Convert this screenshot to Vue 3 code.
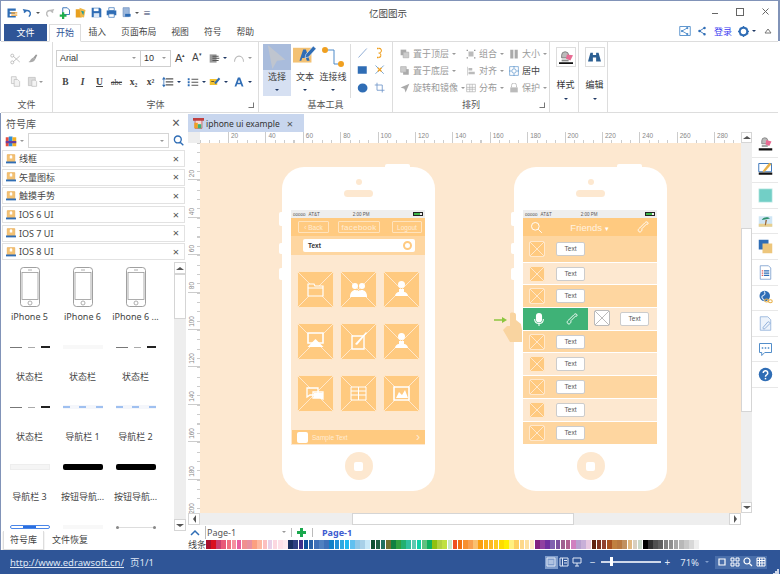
<script setup>
import { h } from 'vue'

const P = (d, fill = 'none', stroke = 'none', sw = 1) => ({ d, fill, stroke, sw })
const ICONS = {
  logo: [P('M2 2h11v3H5v2h7v2H5v3h8v2H2z', '#2f6db5'), P('M7 7h8v1.5H7zM7 10h8v1.5H7z', '#f0a030')],
  undo: [P('M3 8a5 5 0 0 1 9 0c1 3-1 5-2 6', 'none', '#2f6db5', 2), P('M1 3l6 1-3 5z', '#2f6db5')],
  redo: [P('M13 8a5 5 0 0 0-9 0c-1 3 1 5 2 6', 'none', '#bbb', 2), P('M15 3l-6 1 3 5z', '#bbb')],
  newdoc: [P('M5 1h6l3 3v6H5z', '#fff', '#2f6db5', 1.2), P('M1 10h3V7h3v3h3v3H7v3H4v-3H1z', '#1fae4a')],
  open: [P('M1 3h6l2 2v9H1z', '#e8a020'), P('M6 1l8 3-2 10-5-1z', '#f0b848'), P('M8 5l4 1-1 5z', '#1b9c9c')],
  save: [P('M1 1h12l2 2v12H1z', '#2f6db5'), P('M4 2h7v4H4z', '#fff'), P('M4 9h8v6H4z', '#dce8f6')],
  print: [P('M4 1h8v4H4z', '#fff', '#2f6db5'), P('M1 5h14v7H1z', '#2f6db5'), P('M4 10h8v5H4z', '#fff', '#2f6db5')],
  export: [P('M3 1h9v13H3z', '#9db8dc', '#6f90c0'), P('M6 10h8v4H6z', '#2f6db5')],
  share1: [P('M1 2h14v12H1z', '#fff', '#4e8bc9', 1.2), P('M4 8l7-4M4 8l7 4', 'none', '#4e8bc9', 1.2), P('M2.5 8a1.5 1.5 0 1 0 3 0a1.5 1.5 0 1 0-3 0M9.5 4a1.5 1.5 0 1 0 3 0a1.5 1.5 0 1 0-3 0M9.5 12a1.5 1.5 0 1 0 3 0a1.5 1.5 0 1 0-3 0', '#4e8bc9')],
  share2: [P('M4 8l8-5M4 8l8 5', 'none', '#2f6db5', 1.4), P('M2 8a2 2 0 1 0 4 0a2 2 0 1 0-4 0M10 3a2 2 0 1 0 4 0a2 2 0 1 0-4 0M10 13a2 2 0 1 0 4 0a2 2 0 1 0-4 0', '#2f6db5')],
  gear: [P('M8 2.5a5.5 5.5 0 1 0 0 11a5.5 5.5 0 1 0 0-11z', 'none', '#2f6db5', 3), P('M7 0h2v3H7zM7 13h2v3H7zM0 7h3v2H0zM13 7h3v2h-3zM2 3.4L3.4 2l2 2L4 5.4zM12 10.6l1.4-1.4 2 2-1.4 1.4zM2 12.6l2-2L5.4 12l-2 2zM10.6 4l2-2L14 3.4l-2 2z', '#2f6db5')],
  cut: [P('M4 4l9 8M4 12l9-8', 'none', '#bbb', 1.2), P('M1 3.5a2 2 0 1 0 4 0a2 2 0 1 0-4 0M1 12.5a2 2 0 1 0 4 0a2 2 0 1 0-4 0', 'none', '#bbb', 1.2)],
  brush: [P('M9 7l4-5 2 1-3 6z', '#999'), P('M2 13c3 0 3-5 7-6l3 2c-1 4-6 5-10 4z', '#aaa')],
  copy: [P('M2 1h7l0 10H2z', '#f2f2f2', '#bbb'), P('M6 5h5l3 3v7H6z', '#f2f2f2', '#bbb')],
  paste: [P('M2 2h10v12H2z', '#ddd', '#bbb'), P('M7 6h5l2 2v7H7z', '#f4f4f4', '#bbb')],
  alignIc: [P('M1 2h10v12H1z', '#999'), P('M5 4h9v1.5H5zM5 7h10v1.5H5zM5 10h9v1.5H5z', '#555')],
  arc: [P('M2 13C2 3 14 3 14 13', 'none', '#bbb', 1.4)],
  spacing: [P('M5 3h10v1.5H5zM5 7h10v1.5H5zM5 11h10v1.5H5z', '#555'), P('M2.5 1L5 4.5H0zM2.5 15L0 11.5h5z', '#2f6db5'), P('M2 4h1v8H2z', '#2f6db5')],
  bullets: [P('M1 3h2.5v2.5H1zM1 7h2.5v2.5H1zM1 11h2.5v2.5H1z', '#2f6db5'), P('M6 3.5h9V5H6zM6 7.5h9V9H6zM6 11.5h9V13H6z', '#555')],
  marker: [P('M1 4h10v8H1z', '#f2c230'), P('M7 9l6-7 2 2-6 7z', '#2f6db5'), P('M3 7h4v1H3z', '#333')],
  letterA: [P('M6.5 2h3L14 14h-2.5l-1-3h-5l-1 3H2zM8 4.5L6.3 9h3.4z', '#2f6db5')],
  cursor: [P('M3 0l19 16-9 1-5 9z', '#bfc5cf')],
  textTool: [P('M0 3h20v16H0z', '#f3c173'), P('M7 17L11 5h3l4 12h-3l-1-3H10l-1 3z', '#2f6db5'), P('M14 10l8-9 3 3-8 9-4 1z', '#2f6db5', '#fff', .6)],
  connector: [P('M5 5h8v14h7', 'none', '#4e8bc9', 1), P('M1 5a3 3 0 1 0 6 0a3 3 0 1 0-6 0M17 19a3 3 0 1 0 6 0a3 3 0 1 0-6 0', '#f0a020')],
  line: [P('M2 14L13 2', 'none', '#6d94c8', 1)],
  hook: [P('M6 2a3 3 0 0 1 3 5c-1 1-3 1-3 1s4 0 3 4a3 3 0 0 1-3 2', 'none', '#f0a020', 1.4), P('M4 1h2v2H4zM4 13h2v2H4z', '#f0a020')],
  rect: [P('M1 3h12v10H1z', '#2f6db5')],
  cross: [P('M2 2l11 11M2 13L13 2', 'none', '#4e8bc9', 1), P('M5 5l5 5M5 10l5-5', 'none', '#f0a020', 1.5)],
  ellipse: [P('M1 8a6.5 6 0 1 0 13 0a6.5 6 0 1 0-13 0', '#2f6db5')],
  crop: [P('M4 1v10h10M1 4h10v10', 'none', '#6d94c8', 1.1)],
  front: [P('M1 1h9v9H1z', '#aaa'), P('M5 5h9v9H5z', '#ccc', '#aaa')],
  back: [P('M5 5h9v9H5z', '#aaa'), P('M1 1h9v9H1z', '#ccc', '#aaa')],
  rotate: [P('M15 1L1 7l6 2 2 6z', '#aaa')],
  group: [P('M4 4h8v8H4z', '#bbb'), P('M1 1h2v2H1zM13 1h2v2h-2zM1 13h2v2H1zM13 13h2v2h-2z', '#888')],
  alignL: [P('M2 1h1v14H2zM4 3h6v4H4zM4 9h10v4H4z', '#bbb')],
  dist: [P('M1 2h14v12H1zM1 7h14M1 10h14M6 2v12M10 2v12', 'none', '#aaa', 1)],
  size: [P('M2 1h5v14H2zM9 1h5v14H9z', '#aaa')],
  center: [P('M1 1h14v14H1z', '#fff', '#4e8bc9', 1), P('M8 4.5a3.5 3.5 0 1 0 0 7a3.5 3.5 0 1 0 0-7zM8 0v4M8 12v4M0 8h4M12 8h4', 'none', '#4e8bc9', 1)],
  lock: [P('M4 7V4a4 4 0 0 1 8 0v3', 'none', '#bbb', 1.4), P('M2 7h12v8H2z', '#bbb')],
  styleIc: [P('M3 6a4 4 0 0 1 8 0v3H3z', '#bbb', '#777'), P('M9 5l7 1-3 6-5-2z', '#e86a92'), P('M0 14h16v2H0z', '#111'), P('M3 11h8v2H3z', '#888')],
  binoc: [P('M3 2h3v3h4V2h3l3 11h-6V8H6v5H0z', '#2c5f92')],
  lib: [P('M1 3h4v12H1z', '#e84c3d'), P('M5 2h5v13H5z', '#2f8fd8'), P('M10 3h5v12h-5z', '#f4b020'), P('M1 8h14v3H1z', '#6a3fa0', 'none')],
  search: [P('M7 1.5a5 5 0 1 0 0 10a5 5 0 1 0 0-10zM10.5 10.5L15 15', 'none', '#2f6db5', 2)],
  book: [P('M2 1h12v11H2z', '#f3c173', '#e8a84c'), P('M6 3l2-1.5L10 3v4H6z', '#fff'), P('M0 12h16v3H0z', '#2f6db5')],
  docIc: [P('M3 1h7l3 3v11H3z', '#f6d8d8', '#c04040'), P('M0 0h16v4H0z', '#c04040'), P('M2 7h5v8H2z', '#f0a020'), P('M7 9l5 0v6H7z', '#3fb277')],
  sStyle: [P('M5 5a4 4 0 0 1 8 0v4H5z', '#bbb', '#777'), P('M11 4l7 2-3 6-5-2z', '#e86a92'), P('M1 15h18v3H1z', '#111'), P('M5 11h8v2H5z', '#888')],
  sLine: [P('M1 2h17v11H1z', '#fff', '#2f6db5', 1.2), P('M7 11l8-10 3 2-8 9-4 2z', '#e8b048'), P('M1 14h18v3H1z', '#111')],
  sFill: [P('M1 1h18v18H1z', '#72cfc6', '#dff3f1')],
  sImage: [P('M1 3h18v14H1z', '#cfe6f5'), P('M1 13h18v4H1z', '#e8d090'), P('M10 8l-1 7h1.5L12 8z', '#9a6a3c'), P('M5 8c2-4 8-5 11-2l-5 1-6 1z', '#2c8f6c')],
  sLayer: [P('M1 1h13v13H1z', '#2f6db5'), P('M6 6h13v13H6z', '#edc67c')],
  sList: [P('M3 1h11l3 3v15H3z', '#fff', '#6d94c8', 1), P('M5 7h2v1.5H5zM5 10h2v1.5H5zM5 13h2v1.5H5z', '#e06060'), P('M8 7h7v1.5H8zM8 10h7v1.5H8zM8 13h7v1.5H8z', '#2f6db5')],
  sGlobe: [P('M2 8a7 7 0 1 0 14 0a7 7 0 1 0-14 0z', '#2f6db5'), P('M8 2c3 3 0 5-2 6s0 4 3 6', 'none', '#cfe0f5', 1.5), P('M9 14a2.5 2 0 0 1 5 0a2.5 2 0 0 1-5 0zM14 15a2.5 2 0 0 1 5 0a2.5 2 0 0 1-5 0z', 'none', '#e8b048', 1.4)],
  sNote: [P('M3 1h10l4 4v14H3z', '#edf3fb', '#88a9d6', 1), P('M7 15l6-7a2 2 0 0 1 3 2l-7 7a1.3 1.3 0 0 1-2-2', 'none', '#88a9d6', 1.2)],
  sChat: [P('M2 2h16v12H9l-4 4v-4H2z', '#fff', '#4e8bc9', 1.3), P('M5 7h2v2H5zM9 7h2v2H9zM13 7h2v2h-2z', '#4e8bc9')],
  sHelp: [P('M1 10a9 9 0 1 0 18 0a9 9 0 1 0-18 0z', '#2f6db5'), P('M7 8a3 3 0 1 1 4.5 2.5C10.5 11 10 11.5 10 13', 'none', '#fff', 2), P('M9 14.5h2v2H9z', '#fff')],
  folder: [P('M11 13h6l1 2h8v10H11zM11 17h15', 'none', '#fff', 1.2)],
  people: [P('M15 12a3 3 0 1 1 0 6a3 3 0 1 1 0-6zM22 12a3 3 0 1 1 0 6a3 3 0 1 1 0-6zM10 26c0-5 3-7 5-7 2 0 3 1 4 1 1-1 2-1 3-1 2 0 5 2 5 6v1z', '#fff')],
  person: [P('M18.5 10a3.5 3.5 0 1 1 0 7a3.5 3.5 0 1 1 0-7zM12 25c0-2 2-4 4-4v-3h5v3c2 0 4 2 4 4z', '#fff')],
  monitor: [P('M11 10h15v10H11z', 'none', '#fff', 1.6), P('M18.5 16l8 8h-16z', '#fff')],
  edit: [P('M12 13h12v13H12z', 'none', '#fff', 1.4), P('M15 21L26 9l1 1-10 12z', '#fff')],
  chat: [P('M10 13h11v7h-8l-3 2zM16 17h10v7l-3-1h-7z', 'none', '#fff', 1.3), P('M17 18h9v5h-9z', '#fff')],
  bookT: [P('M11 12h15v13H11zM18.5 12v13M11 16h15M11 20h15', 'none', '#fff', 1)],
  image: [P('M11 12h15v13H11z', 'none', '#fff', 1.6), P('M13 23l3-6 3 3 3-5 3 8z', '#fff')],
  mic: [P('M8 1a3.5 3.5 0 0 1 3.5 3.5v4a3.5 3.5 0 0 1-7 0v-4A3.500 3.500 0 0 1 8 1z', '#fff'), P('M3 8c0 7 10 7 10 0M8 13v3', 'none', '#fff', 1.2)],
  phoneT: [P('M5 20c-3-3 0-5 1-6l9-9c1-1 3-3 5-1 2 2 0 4-2 3l-8 8c1 3-2 7-5 5z', 'none', '#fff', 1.6)],
  searchT: [P('M9 2.5a6.5 6.5 0 1 0 0 13a6.5 6.5 0 1 0 0-13zM14 14l6 6', 'none', '#fff', 1.6)]
}

const Ico = (props) => {
  const vb = props.vb || 16
  return h('svg', { width: props.w || 14, height: props.h || props.w || 14, viewBox: `0 0 ${vb} ${vb}`, class: props.cls, style: 'display:block;flex:none' },
    (ICONS[props.n] || []).map((p) => h('path', { d: p.d, fill: p.fill, stroke: p.stroke, 'stroke-width': p.sw })))
}
Ico.props = ['n', 'w', 'h', 'vb', 'cls']

const tabs = ['插入', '页面布局', '视图', '符号', '帮助']
const fontRow = [
  { t: 'B', c: 'fb' }, { t: 'I', c: 'fi' }, { t: 'U', c: 'fu' }, { t: 'abc', c: 'fs' }, { t: 'x₂', c: 'fb' }, { t: 'x²', c: 'fb' }
]
const arrange = [
  { i: 'front', t: '置于顶层', a: 1 }, { i: 'group', t: '组合', a: 1 }, { i: 'size', t: '大小', a: 1 },
  { i: 'back', t: '置于底层', a: 1 }, { i: 'alignL', t: '对齐', a: 1 }, { i: 'center', t: '居中', a: 0, dark: 1 },
  { i: 'rotate', t: '旋转和镜像', a: 1 }, { i: 'dist', t: '分布', a: 1 }, { i: 'lock', t: '保护', a: 1 }
]
const libs = ['线框', '矢量图标', '触摸手势', 'IOS 6 UI', 'IOS 7 UI', 'IOS 8 UI']
const symbols = [
  { l: 'iPhone 5', k: 'phone' }, { l: 'iPhone 6', k: 'phone' }, { l: 'iPhone 6 ...', k: 'phone' },
  { l: '状态栏', k: 'status' }, { l: '状态栏', k: 'faint' }, { l: '状态栏', k: 'status' },
  { l: '状态栏', k: 'status' }, { l: '导航栏 1', k: 'nav' }, { l: '导航栏 2', k: 'nav' },
  { l: '导航栏 3', k: 'plain' }, { l: '按钮导航...', k: 'black' }, { l: '按钮导航...', k: 'black' },
  { l: '', k: 'seg' }, { l: '', k: 'faint' }, { l: '', k: 'slider' }
]
const hLabels = Array.from({ length: 14 }, (_, i) => (i + 1) * 20)
const vLabels = Array.from({ length: 10 }, (_, i) => (i + 1) * 20)
const tiles = ['folder', 'people', 'person', 'monitor', 'edit', 'person', 'chat', 'bookT', 'image']
const rows = [
  { c: 'dark', h: 27 }, { c: 'light', h: 22 }, { c: 'dark', h: 23 }, { c: 'green', h: 23 }, { c: 'dark', h: 22 },
  { c: 'light', h: 23 }, { c: 'dark', h: 23 }, { c: 'light', h: 23 }, { c: 'dark', h: 23 }
]
const side = ['sStyle', 'sLine', 'sFill', 'sImage', 'sLayer', 'sList', 'sGlobe', 'sNote', 'sChat', 'sHelp']
const palette = [
  'a8102e','d9101f','c94070','e85a78','f07080','f590a0','e860a0','f09090','e890a0','fba080','fdb8a0','fcc0c0','e8d0e8','fcd8e0','fde0e8','fdeaf0',
  '1a2f60','2f3f80','3f2f8a','0f4f9a','2860a8','4070b8','5080c0','3f70b8','1080c8','2090d8','30a8e0','20b8f0','60c0f0','90c8e8','a8d0e8','c8e8f8',
  '0f5030','1f6040','207060','707030','108040','30a040','20b070','30c0a0','60c8b0','10d0a8','60c080','10b060','90c010','b0d040','c0e040','c8e8c8',
  'f05020','f07010','f89030','f8a050','fac070','fa9f10','fcb018','fdb820','fec820','fedc00','ffee00','fff080','fdd060','fdd88a','fde0a0','fee8c0',
  '802080','9040a0','7030a0','8060b0','7c50a0','a06090','b06090','d080c0','b8a0d0','c8b0d8','e8c8e0',
  '602010','803020','904030','a85020','c08040','b87840','c09060','e0b880','d8d0c0','c8d8c8',
  '000000','303030','505050','606060','808080','909090','a8a8a8','b8b8b8','c8c8c8','d8d8d8','eeeeee'
].map((c) => '#' + c)
</script>

<template>
  <div class="app">
    <header class="title">
      <div class="qat">
        <Ico n="logo" :w="12" />
        <Ico n="undo" :w="11" class="ml" /><i class="dd" />
        <Ico n="redo" :w="11" class="ml" />
        <Ico n="newdoc" :w="12" class="ml" />
        <Ico n="open" :w="12" class="ml" />
        <Ico n="save" :w="11" class="ml" />
        <Ico n="print" :w="11" class="ml" />
        <Ico n="export" :w="11" class="ml" /><i class="dd" />
        <span class="more">≡</span>
      </div>
      <span class="app-name">亿图图示</span>
      <div class="win">
        <span class="min" /><span class="max" />
        <svg width="7" height="7" viewBox="0 0 7 7"><path d="M.5.5l6 6M.5 6.5l6-6" stroke="#666" fill="none" /></svg>
      </div>
    </header>

    <nav class="tabs">
      <span class="file-tab">文件</span>
      <span class="tab on">开始</span>
      <span v-for="t in tabs" :key="t" class="tab">{{ t }}</span>
      <div class="acct">
        <Ico n="share1" :w="12" />
        <Ico n="share2" :w="10" class="a2" />
        <span class="login">登录</span>
        <Ico n="gear" :w="11" class="a3" /><i class="dd navy" />
        <svg class="coll" width="8" height="6" viewBox="0 0 8 6"><path d="M1 5l3-4 3 4z" fill="none" stroke="#777" /></svg>
      </div>
    </nav>

    <section class="ribbon">
      <div class="grp g-file">
        <div class="gbody f-grid">
          <Ico n="cut" :w="12" /><Ico n="brush" :w="11" />
          <Ico n="copy" :w="11" /><div class="flex-c"><Ico n="paste" :w="11" /><i class="dd grey" /></div>
        </div>
        <div class="glabel">文件</div>
      </div>

      <div class="grp g-font">
        <div class="gbody">
          <div class="font-row1">
            <div class="combo font-name"><span>Arial</span><i class="dd grey" /></div>
            <div class="combo font-size"><span>10</span><i class="dd grey" /></div>
            <span class="big-a">A<sup>▴</sup></span>
            <span class="big-a sm">A<sup>▾</sup></span>
            <Ico n="alignIc" :w="11" class="ali" /><i class="dd navy" />
            <Ico n="arc" :w="12" class="ali2" /><i class="dd grey" />
          </div>
          <div class="font-row2">
            <span v-for="f in fontRow" :key="f.t" class="fbtn" :class="f.c">{{ f.t }}</span>
            <Ico n="spacing" :w="12" class="fi1" /><i class="dd navy" />
            <Ico n="bullets" :w="12" class="fi2" /><i class="dd navy" />
            <Ico n="marker" :w="12" class="fi3" /><i class="dd navy" />
            <Ico n="letterA" :w="12" class="fi4" /><i class="dd navy" />
          </div>
        </div>
        <div class="glabel">字体<span class="launch" /></div>
      </div>

      <div class="grp g-tools">
        <div class="gbody tools">
          <div class="tool sel">
            <div class="sel-top"><Ico n="cursor" :w="24" :vb="26" /></div>
            <span>选择</span><i class="dd navy" />
          </div>
          <div class="tool"><div class="tool-ic"><Ico n="textTool" :w="24" :vb="26" /></div><span>文本</span><i class="dd navy" /></div>
          <div class="tool"><div class="tool-ic"><Ico n="connector" :w="24" :vb="24" /></div><span>连接线</span><i class="dd navy" /></div>
          <div class="shapes">
            <Ico n="line" :w="12" /><Ico n="hook" :w="12" />
            <Ico n="rect" :w="12" /><Ico n="cross" :w="12" />
            <Ico n="ellipse" :w="12" /><Ico n="crop" :w="12" />
          </div>
        </div>
        <div class="glabel">基本工具</div>
      </div>

      <div class="grp g-arr">
        <div class="gbody arr">
          <div v-for="a in arrange" :key="a.t" class="arr-item" :class="{ dark: a.dark }">
            <Ico :n="a.i" :w="10" /><span>{{ a.t }}</span><i v-if="a.a" class="dd grey" />
          </div>
        </div>
        <div class="glabel">排列<span class="launch" /></div>
      </div>

      <div class="grp g-big">
        <div class="big-box"><Ico n="styleIc" :w="14" /></div>
        <span class="big-label">样式</span><i class="dd navy" />
      </div>
      <div class="grp g-big">
        <div class="big-box"><Ico n="binoc" :w="13" /></div>
        <span class="big-label">编辑</span><i class="dd navy" />
      </div>
    </section>

    <main class="work">
      <aside class="lib">
        <div class="lib-head"><span>符号库</span><b class="x big">×</b></div>
        <div class="lib-search">
          <Ico n="lib" :w="12" /><i class="dd grey" />
          <div class="sbox"><i class="dd grey" /></div>
          <Ico n="search" :w="11" />
        </div>
        <div class="lib-list">
          <div v-for="l in libs" :key="l" class="lib-item">
            <Ico n="book" :w="10" /><span>{{ l }}</span><b class="x">×</b>
          </div>
        </div>
        <div class="sym-wrap">
          <div class="sym-grid">
            <div v-for="(s, i) in symbols" :key="i" class="sym">
              <div class="thumb">
                <svg v-if="s.k === 'phone'" width="20" height="40" viewBox="0 0 20 40">
                  <rect x=".5" y=".5" width="19" height="39" rx="3" fill="#fff" stroke="#888" stroke-width=".8" />
                  <rect x="2" y="5.5" width="16" height="27" fill="#fff" stroke="#999" stroke-width=".8" />
                  <circle cx="10" cy="36" r="2" fill="none" stroke="#999" stroke-width=".8" /><path d="M8 3h4" stroke="#999" stroke-width=".8" />
                </svg>
                <div v-else class="th" :class="'th-' + s.k"><i /><i /><i /></div>
              </div>
              <div class="sym-l">{{ s.l }}</div>
            </div>
          </div>
          <div class="vbar lib-bar">
            <span class="sb-btn"><i class="up" /></span>
            <span class="thumb-v" />
            <span class="sb-fill" />
            <span class="sb-btn"><i class="down" /></span>
          </div>
        </div>
        <div class="lib-tabs"><span class="lt on">符号库</span><span class="lt">文件恢复</span></div>
      </aside>

      <section class="doc">
        <div class="doc-tabs">
          <div class="doc-tab"><Ico n="docIc" :w="11" /><span>iphone ui example</span><b>×</b></div>
        </div>
        <div class="doc-main">
          <div class="doc-left">
            <div class="ruler-h">
              <div class="corner" />
              <div class="rh-track">
                <div v-for="n in hLabels" :key="n" class="rh">{{ n }}</div>
              </div>
            </div>
            <div class="doc-mid">
              <div class="ruler-v"><div v-for="n in vLabels" :key="n" class="rv"><span>{{ n }}</span></div></div>
              <div class="canvas">
                <!-- Phone 1 -->
                <div class="phone">
                  <i class="pb b1" /><i class="pb b2" /><i class="pb b3" /><i class="pt" />
                  <span class="cam" /><span class="spk" />
                  <div class="screen">
                    <div class="sbar"><span>ooooo</span><span>AT&amp;T</span><span class="clock">2:00 PM</span><span class="batt"><i /></span></div>
                    <div class="nav1">
                      <span class="nbtn back">‹ Back</span><span class="nbtn fb1">facebook</span><span class="nbtn logout">Logout</span>
                    </div>
                    <div class="srch"><div class="srch-in"><b>Text</b><i class="clear" /></div></div>
                    <div class="tiles">
                      <svg v-for="(t, i) in tiles" :key="i" width="37" height="37" viewBox="0 0 37 37">
                        <rect x=".5" y=".5" width="36" height="36" rx="2" fill="#ffca80" stroke="#ffe8cc" />
                        <path d="M1 1l35 35M36 1L1 36" stroke="#ffe8cc" />
                        <path v-for="(p, j) in ICONS[t]" :key="j" :d="p.d" :fill="p.fill === 'none' ? '#ffca80' : p.fill" :stroke="p.stroke" :stroke-width="p.sw" />
                      </svg>
                    </div>
                    <div class="foot"><i class="sq" /><span>Sample Text</span><em>›</em></div>
                  </div>
                  <div class="home"><i /></div>
                </div>

                <!-- Phone 2 -->
                <div class="phone">
                  <i class="pb b1" /><i class="pb b2" /><i class="pb b3" /><i class="pt" />
                  <span class="cam" /><span class="spk" />
                  <div class="screen">
                    <div class="sbar"><span>ooooo</span><span>AT&amp;T</span><span class="clock c2">2:00 PM</span><span class="batt"><i /></span></div>
                    <div class="nav2">
                      <Ico n="searchT" :w="13" :vb="22" />
                      <span class="fr">Friends <small>▾</small></span>
                      <Ico n="phoneT" :w="14" :vb="24" />
                    </div>
                    <div v-for="(r, i) in rows" :key="i" class="row" :class="r.c" :style="{ height: r.h + 'px' }">
                      <template v-if="r.c === 'green'">
                        <div class="swipe"><Ico n="mic" :w="14" /><Ico n="phoneT" :w="14" :vb="24" /></div>
                        <div class="mini grey-t"><svg width="16" height="16" viewBox="0 0 16 16"><rect x=".5" y=".5" width="15" height="15" rx="1.5" fill="#fff" stroke="#bbb" /><path d="M1 1l14 14M15 1L1 15" stroke="#bbb" /></svg></div>
                        <span class="tbtn t2">Text</span>
                      </template>
                      <template v-else>
                        <svg class="mini" width="16" height="16" viewBox="0 0 16 16"><rect x=".5" y=".5" width="15" height="15" rx="1.5" fill="#ffca80" stroke="#ffe8cc" /><path d="M1 1l14 14M15 1L1 15" stroke="#ffe8cc" /></svg>
                        <span class="tbtn">Text</span>
                      </template>
                    </div>
                  </div>
                  <div class="home"><i /></div>
                </div>

                <svg class="hand" width="30" height="32" viewBox="0 0 30 32">
                  <path d="M16 2C16 0 22 0 22 3L22 8L27 12L28 18L28 30L16 30L9 18L13 14L16 14z" fill="#f9d4a0" />
                  <path d="M0 8h9" stroke="#8cc63f" stroke-width="1.5" /><path d="M8 5l5 3-5 3z" fill="#8cc63f" />
                </svg>
              </div>
            </div>
            <div class="hbar">
              <span class="sb-btn"><i class="left" /></span>
              <span class="h-pad" /><span class="thumb-h" /><span class="h-fill" />
              <span class="sb-btn"><i class="right" /></span>
            </div>
          </div>
          <div class="vbar doc-bar">
            <span class="sb-btn"><i class="up" /></span>
            <span class="v-pad" />
            <span class="thumb-v t2v" />
            <span class="sb-fill" />
            <span class="sb-btn"><i class="down" /></span>
          </div>
          <div class="side">
            <div v-for="s in side" :key="s" class="side-i"><Ico :n="s" :w="15" :vb="20" /></div>
          </div>
        </div>
        <div class="pages">
          <svg width="10" height="7" viewBox="0 0 10 7"><path d="M1 6l4-4 4 4" fill="none" stroke="#2f6db5" stroke-width="1.5" /></svg>
          <span class="pg1">Page-1</span><i class="dd grey pg-d" /><span class="vsep" />
          <svg class="plus" width="9" height="9" viewBox="0 0 9 9"><path d="M3 0h3v3h3v3H6v3H3V6H0V3h3z" fill="#1aa84d" /></svg>
          <span class="vsep s2" />
          <span class="pg2">Page-1</span>
        </div>
        <div class="colors">
          <span class="cl">线条</span>
          <div class="swatches"><i v-for="(c, i) in palette" :key="i" :style="{ background: c }" /></div>
        </div>
      </section>
    </main>

    <footer class="status">
      <a class="link">http://www.edrawsoft.cn/</a><span class="pgn">页1/1</span>
      <div class="st-right">
        <span class="vb on"><svg width="10" height="10" viewBox="0 0 10 10"><path d="M1 1h8v8H1zM2.5 4h5M2.5 6h5" fill="none" stroke="#dfe7f5" /></svg></span>
        <span class="vb"><svg width="10" height="10" viewBox="0 0 10 10"><path d="M1 1h8v8H1zM3.5 1v8M5 3.5h3M5 6h3" fill="none" stroke="#dfe7f5" /></svg></span>
        <span class="vb"><svg width="10" height="10" viewBox="0 0 10 10"><path d="M1 1h8v5H1zM5 6v3M3 9h4" fill="none" stroke="#dfe7f5" /></svg></span>
        <span class="pm minus">−</span>
        <div class="slider"><i /></div>
        <span class="pm plusz">+</span>
        <span class="pct">71%</span><i class="dd st-d" />
        <span class="vb dk"><svg width="10" height="10" viewBox="0 0 10 10"><path d="M2 2h6v6H2z" fill="none" stroke="#fff" stroke-width="1.2" /></svg></span>
        <span class="vb dk"><svg width="10" height="10" viewBox="0 0 10 10"><path d="M1 1h3v3H1zM6 1h3v3H6zM1 6h3v3H1zM6 6h3v3H6z" fill="none" stroke="#fff" /></svg></span>
        <span class="vb dk"><svg width="10" height="10" viewBox="0 0 10 10"><path d="M4 1a3 3 0 1 0 0 6a3 3 0 1 0 0-6zM6 6l3 3" fill="none" stroke="#fff" stroke-width="1.2" /></svg></span>
        <span class="vb dk"><svg width="10" height="10" viewBox="0 0 10 10"><path d="M1 1h8v8H1zM1 3.5h8M1 6h8M3.5 1v8M6 1v8" fill="none" stroke="#fff" /></svg></span>
        <svg class="grip" width="6" height="6" viewBox="0 0 6 6"><path d="M4 0h2v2H4zM2 2h2v2H2zM4 2h2v2H4zM0 4h2v2H0zM2 4h2v2H2zM4 4h2v2H4z" fill="#cfd8ea" /></svg>
      </div>
    </footer>
  </div>
</template>

<style>
html, body { margin: 0; padding: 0; background: #fff; }
</style>

<style scoped>
.app { width: 780px; height: 574px; box-sizing: border-box; display: flex; flex-direction: column; overflow: hidden; background: #fff; border-top: 1px solid #8193b8; font-family: "Noto Sans", "Noto Sans CJK SC", sans-serif; font-size: 9px; color: #444; }
.dd { display: inline-block; width: 0; height: 0; border-left: 2px solid transparent; border-right: 2px solid transparent; border-top: 2.5px solid #555; flex: none; }
.dd.navy { border-top-color: #1f3864; }
.dd.grey { border-top-color: #999; }

.title { height: 23px; flex: none; display: flex; align-items: center; position: relative; padding: 0 2px; border-left: 1px solid #8193b8; border-right: 2px solid #8193b8; }
.qat { display: flex; align-items: center; padding-left: 3px; }
.qat .ml { margin-left: 4px; }
.qat .dd { margin-left: 3px; }
.more { font-size: 8px; color: #1f3864; margin-left: 4px; }
.app-name { position: absolute; left: 368px; top: 5px; font-size: 9.5px; color: #444; }
.win { margin-left: auto; display: flex; align-items: center; gap: 18px; padding-right: 7px; padding-bottom: 2px; }
.min { width: 6px; height: 1px; background: #666; margin-top: 4px; }
.max { width: 6px; height: 6px; border: 1px solid #666; }

.tabs { height: 17px; flex: none; display: flex; align-items: stretch; padding-left: 3px; border-left: 1px solid #8193b8; border-right: 2px solid #8193b8; }
.file-tab { width: 43px; background: #2f5597; color: #fff; text-align: center; line-height: 17px; font-size: 9px; margin-right: 2px; }
.tab { padding: 0 7.5px; line-height: 17px; font-size: 8.8px; color: #444; }
.tab.on { width: 32px; box-sizing: border-box; padding: 0; text-align: center; border: 1px solid #ddd; border-bottom: 1px solid #fff; color: #2f5597; line-height: 16px; height: 18px; position: relative; z-index: 1; background: #fff; font-size: 9px; }
.acct { margin-left: auto; display: flex; align-items: center; padding: 0 6px 3px 0; }
.a2 { margin-left: 6px; }
.login { color: #3a3af0; margin-left: 7px; font-size: 9px; }
.a3 { margin-left: 6px; }
.acct .dd { margin-left: 3px; }
.coll { margin-left: 8px; }

.ribbon { height: 72px; flex: none; margin: 0 2px 0 1px; display: flex; border-top: 1px solid #ddd; border-bottom: 1px solid #ddd; box-sizing: border-box; }
.grp { display: flex; flex-direction: column; border-right: 1px solid #ddd; box-sizing: border-box; flex: none; }
.gbody { flex: 1; }
.glabel { height: 14px; line-height: 13px; text-align: center; color: #555; position: relative; font-size: 9px; }
.launch { position: absolute; right: 4px; top: 4px; width: 4px; height: 4px; border: 1px solid #777; border-left-color: transparent; border-top-color: transparent; }
.g-file { width: 52px; }
.f-grid { display: grid; grid-template-columns: 17px 18px; grid-template-rows: 23px 23px; padding: 5px 0 0 9px; align-items: center; }
.flex-c { display: flex; align-items: center; gap: 1px; }
.g-font { width: 206px; }
.font-row1 { display: flex; align-items: center; padding: 7px 0 0 3px; height: 18px; }
.combo { height: 17px; box-sizing: border-box; border: 1px solid #cfcfcf; display: flex; align-items: center; justify-content: space-between; padding: 0 4px 0 3px; font-size: 9px; color: #333; font-family: "Liberation Sans", sans-serif; }
.font-name { width: 85px; }
.font-size { width: 31px; margin-left: -1px; }
.big-a { font-size: 11px; color: #444; margin-left: 4px; width: 15px; line-height: 12px; font-family: "Liberation Sans", sans-serif; }
.big-a sup { font-size: 5px; vertical-align: 5px; line-height: 0; }
.big-a.sm { margin-left: 2px; font-size: 10px; }
.ali { margin-left: 2px; }
.font-row1 .dd { margin-left: 3px; }
.ali2 { margin-left: 6px; }
.font-row2 { display: flex; align-items: center; padding: 6px 0 0 4px; height: 18px; }
.font-row2 .dd { margin-left: 3px; }
.fbtn { width: 17px; text-align: center; font-family: "Liberation Serif", serif; font-size: 9.5px; color: #444; flex: none; }
.fb { font-weight: 700; } .fi { font-style: italic; font-weight: 700; } .fu { text-decoration: underline; font-weight: 700; } .fs { text-decoration: line-through; font-size: 8px; }
.fi1 { margin-left: 3px; } .fi2 { margin-left: 6px; } .fi3 { margin-left: 3px; } .fi4 { margin-left: 5px; }

.g-tools { width: 134px; }
.tools { display: flex; padding: 2px 0 0 4px; }
.tool { display: flex; flex-direction: column; align-items: center; width: 28px; font-size: 9px; height: 52px; color: #444; }
.tool.sel { background: #d6e0f2; }
.sel-top { background: #a9bcdc; width: 100%; height: 26px; display: flex; align-items: center; justify-content: center; }
.tool-ic { height: 26px; display: flex; align-items: center; justify-content: center; }
.tool span { line-height: 14px; white-space: nowrap; }
.tool .dd { margin-top: 5px; }
.shapes { margin-left: 3px; padding-left: 6px; border-left: 1px solid #ddd; display: grid; grid-template-columns: 12px 12px; grid-auto-rows: 17.5px; gap: 0 5px; align-items: center; height: 54px; }

.g-arr { width: 157px; }
.arr { display: grid; grid-template-columns: 66px 43px 40px; grid-auto-rows: 17px; padding: 3px 0 0 7px; }
.arr-item { display: flex; align-items: center; color: #9a9a9a; font-size: 9px; white-space: nowrap; }
.arr-item span { margin-left: 3px; }
.arr-item .dd { margin-left: 3px; }
.arr-item.dark { color: #444; }

.g-big { width: 29px; align-items: center; padding: 5px 0 0 3px; }
.big-box { width: 20px; height: 20px; box-sizing: border-box; border: 1px solid #ddd; display: flex; align-items: center; justify-content: center; flex: none; }
.big-label { margin-top: 12px; font-size: 9px; color: #333; line-height: 12px; }
.g-big .dd { margin-top: 7px; }

.work { flex: 1; min-height: 0; display: flex; border-left: 1px solid #8193b8; padding-top: 1px; }
.lib { width: 186px; flex: none; display: flex; flex-direction: column; box-sizing: border-box; overflow: hidden; }
.lib-head { height: 18px; display: flex; align-items: center; justify-content: space-between; padding: 0 7px 0 5px; font-size: 10px; color: #555; flex: none; }
.x { font-weight: 400; font-size: 11px; color: #555; line-height: 10px; }
.x.big { font-size: 14px; }
.lib-search { height: 17px; display: flex; align-items: center; padding-left: 4px; flex: none; }
.lib-search .dd { margin-left: 3px; }
.sbox { width: 141px; height: 15px; box-sizing: border-box; border: 1px solid #d5d5d5; margin: 0 4px; display: flex; align-items: center; justify-content: flex-end; padding-right: 4px; }
.lib-list { padding: 1px 0 0 1px; flex: none; }
.lib-item { width: 183px; height: 17px; box-sizing: border-box; border: 1px solid #e2e2e2; margin-bottom: 1.7px; display: flex; align-items: center; padding: 0 5px 0 3px; font-size: 9px; color: #444; }
.lib-item span { margin-left: 3px; flex: 1; }
.sym-wrap { flex: 1; min-height: 0; display: flex; padding-left: 1px; position: relative; }
.sym-grid { width: 170px; display: grid; grid-template-columns: repeat(3, 53px); grid-auto-rows: 60px; padding: 1px 0 0 1px; overflow: hidden; height: 267px; }
.sym { text-align: center; position: relative; }
.thumb { height: 48px; display: flex; align-items: center; justify-content: center; }
.sym-l { font-size: 9px; line-height: 12px; color: #444; }
.th { width: 40px; height: 4px; display: flex; justify-content: space-between; align-items: center; }
.th i { display: block; }
.th-status i { height: 1px; width: 12px; background: #777; }
.th-status i:last-child { width: 9px; height: 2px; background: #222; }
.th-status i:nth-child(2) { width: 7px; background: #aaa; }
.th-faint { background: #f8f8f8; }
.th-nav { background: #f4f6fb; }
.th-nav i { height: 2px; width: 7px; background: #9fc0f0; }
.th-plain { background: #f5f5f5; height: 6px; border: 1px solid #eee; box-sizing: border-box; }
.th-black { background: #000; height: 6px; border-radius: 2px; }
.th-seg { border: 1px solid #4a86e8; border-radius: 3px; box-sizing: border-box; }
.th-seg i { flex: 1; height: 100%; }
.th-seg i:nth-child(2) { background: #2a6fe0; }
.th-slider { height: 1px; background: #ddd; }
.th-slider i { width: 3px; height: 3px; border-radius: 50%; background: #888; }
.th-slider i:nth-child(2) { background: transparent; }

.vbar { display: flex; flex-direction: column; background: #eee; flex: none; width: 12px; }
.lib-bar { height: 269px; margin-left: 1px; }
.sb-btn { width: 12px; height: 12px; box-sizing: border-box; background: #fff; border: 1px solid #d5d5d5; display: flex; align-items: center; justify-content: center; flex: none; }
.sb-btn i { width: 0; height: 0; display: block; }
.up { border-left: 4px solid transparent; border-right: 4px solid transparent; border-bottom: 3.5px solid #555; }
.down { border-left: 4px solid transparent; border-right: 4px solid transparent; border-top: 3.5px solid #555; }
.left { border-top: 4px solid transparent; border-bottom: 4px solid transparent; border-right: 3.5px solid #555; }
.right { border-top: 4px solid transparent; border-bottom: 4px solid transparent; border-left: 3.5px solid #555; }
.thumb-v { display: block; width: 12px; height: 45px; box-sizing: border-box; background: #fff; border: 1px solid #d5d5d5; flex: none; }
.sb-fill { flex: 1; }
.lib-tabs { height: 19px; display: flex; padding-left: 2px; flex: none; align-items: stretch; }
.lt { padding: 0 7px; line-height: 18px; font-size: 9px; margin-right: 1px; color: #444; }
.lt.on { border: 1px solid #ddd; border-top: 0; box-shadow: 0 1px 1px #bbb; width: 41px; box-sizing: border-box; text-align: center; padding: 0; margin-right: 1px; }

.doc { flex: 1; min-width: 0; display: flex; flex-direction: column; padding-left: 1px; }
.doc-tabs { height: 18px; flex: none; display: flex; }
.doc-tab { width: 116px; background: #c8d6ee; display: flex; align-items: center; padding-left: 5px; box-sizing: border-box; font-size: 8.5px; color: #333; }
.doc-tab span { margin-left: 2px; }
.doc-tab b { font-weight: 400; font-size: 11px; margin-left: 7px; color: #555; }
.doc-main { height: 393px; flex: none; display: flex; }
.doc-left { width: 553px; display: flex; flex-direction: column; flex: none; }
.ruler-h { height: 11px; display: flex; flex: none; background: #fff; }
.corner { width: 12px; background: #eee; flex: none; }
.rh-track { flex: 1; overflow: hidden; display: flex; padding-left: 28px; background: repeating-linear-gradient(90deg, #ccc 0 1px, transparent 1px 9.35px) 0 8px / 100% 3px no-repeat; }
.rh { width: 37.4px; flex: none; box-sizing: border-box; font-size: 6.5px; color: #888; line-height: 8px; padding-left: 2px; border-left: 1px solid #ccc; font-family: "Liberation Sans", sans-serif; }
.doc-mid { flex: 1; min-height: 0; display: flex; }
.ruler-v { width: 12px; flex: none; overflow: hidden; background: repeating-linear-gradient(180deg, #ccc 0 1px, transparent 1px 9.35px) 9px 0 / 3px 100% no-repeat; }
.rv { height: 37.4px; box-sizing: border-box; border-bottom: 1px solid #ccc; display: flex; align-items: flex-end; }
.rv span { writing-mode: vertical-rl; transform: rotate(180deg); font-size: 6.5px; color: #888; line-height: 8px; font-family: "Liberation Sans", sans-serif; padding-top: 2px; }
.canvas { flex: 1; min-width: 0; background: #fde8d0; position: relative; overflow: hidden; display: flex; padding: 24px 0 0 82px; gap: 79px; align-items: flex-start; }
.phone { width: 153px; height: 324px; background: #fff; border-radius: 22px; position: relative; display: flex; flex-direction: column; align-items: center; flex: none; }
.pb { position: absolute; left: -3px; width: 3px; background: #fff; border-radius: 2px 0 0 2px; }
.b1 { top: 45px; height: 14px; } .b2 { top: 76px; height: 11px; } .b3 { top: 101px; height: 12px; }
.pt { position: absolute; top: -3px; left: 103px; width: 25px; height: 3px; background: #fff; border-radius: 2px 2px 0 0; }
.cam { width: 6px; height: 6px; border-radius: 50%; background: #fde8d0; margin-top: 12px; flex: none; }
.spk { width: 29px; height: 7px; border-radius: 4px; background: #fde8d0; margin-top: 5px; flex: none; }
.screen { width: 134px; height: 235px; background: #fde8d0; margin-top: 13px; flex: none; margin-left: -1px; display: flex; flex-direction: column; overflow: hidden; position: relative; }
.home { width: 28px; height: 28px; border-radius: 50%; background: #fde8d0; margin-top: 7px; display: flex; align-items: center; justify-content: center; flex: none; }
.home i { width: 9px; height: 9px; background: #fff; border-radius: 2px; display: block; }
.sbar { height: 8px; background: #eee; display: flex; align-items: center; font-size: 4.5px; color: #555; padding: 0 2px; gap: 3px; flex: none; font-family: "Liberation Sans", sans-serif; }
.clock { margin-left: 30px; } .clock.c2 { margin-left: 26px; }
.batt { margin-left: auto; width: 10px; height: 4px; border: 1px solid #222; box-sizing: border-box; }
.batt i { display: block; height: 100%; width: 80%; background: #3db54a; }
.nav1 { height: 18px; background: #ffca80; display: flex; align-items: center; flex: none; font-family: "Liberation Sans", sans-serif; }
.nbtn { border: 1px solid #ffe3bd; border-radius: 1px; color: #ffecd4; height: 12px; line-height: 11px; box-sizing: border-box; font-size: 6.5px; text-align: center; }
.back { width: 31px; margin-left: 7px; }
.fb1 { width: 42px; margin-left: 9px; font-size: 8px; letter-spacing: .3px; }
.logout { width: 30px; margin-left: 12px; }
.srch { height: 19px; background: #fed6a0; display: flex; align-items: center; padding-left: 12px; flex: none; }
.srch-in { width: 112px; height: 13px; background: #fff; border-radius: 2px; display: flex; align-items: center; justify-content: space-between; padding: 0 3px 0 5px; box-sizing: border-box; font-family: "Liberation Sans", sans-serif; }
.srch-in b { font-size: 6.5px; color: #333; }
.clear { width: 9px; height: 9px; border-radius: 50%; background: #fff; border: 2.5px solid #ffca80; box-sizing: border-box; }
.tiles { display: grid; grid-template-columns: repeat(3, 37px); grid-auto-rows: 37px; gap: 15px 6px; padding: 16px 0 0 6px; flex: none; }
.foot { position: absolute; left: 1px; right: 0; bottom: 1px; height: 14px; background: #ffca80; display: flex; align-items: center; color: #ffecd4; font-size: 6.5px; font-family: "Liberation Sans", sans-serif; }
.sq { width: 11px; height: 11px; background: #fff; border-radius: 2px; margin-left: 5px; }
.foot span { margin-left: 4px; }
.foot em { margin-left: auto; margin-right: 5px; font-style: normal; font-size: 12px; line-height: 12px; color: #ffecd4; }
.nav2 { height: 18px; background: #ffca80; display: flex; align-items: center; padding: 0 7px; flex: none; justify-content: space-between; font-family: "Liberation Sans", sans-serif; }
.fr { color: #fff3e2; font-size: 9.5px; }
.fr small { font-size: 7px; color: #fff; }
.row { display: flex; align-items: center; box-sizing: border-box; flex: none; border-bottom: 1px solid #fff; }
.row.dark { background: #fed6a0; }
.row.light { background: #fde8d0; }
.row.green { background: #fde8d0; }
.mini { margin-left: 6px; flex: none; display: block; }
.tbtn { width: 29px; height: 14px; box-sizing: border-box; background: #fff; border: 1px solid #ccc; border-radius: 2px; color: #555; font-size: 6.5px; text-align: center; line-height: 12px; margin-left: 11px; font-family: "Liberation Sans", sans-serif; flex: none; }
.swipe { width: 65px; height: 100%; background: #3fb277; display: flex; align-items: center; justify-content: space-around; flex: none; }
.grey-t { margin-left: 6px; }
.tbtn.t2 { margin-left: 10px; }
.hand { position: absolute; left: 294px; top: 169px; }

.hbar { height: 12px; display: flex; background: #eee; flex: none; }
.h-pad { width: 152px; flex: none; }
.thumb-h { width: 222px; flex: none; background: #fff; border: 1px solid #d5d5d5; box-sizing: border-box; }
.h-fill { flex: 1; }
.doc-bar { height: 381px; width: 11px; }
.doc-bar .sb-btn { width: 11px; height: 11px; }
.v-pad { height: 85px; flex: none; }
.thumb-v.t2v { width: 11px; height: 184px; }
.side { width: 26px; flex: none; box-sizing: border-box; }
.side-i { height: 25.6px; box-sizing: border-box; border-bottom: 1px solid #e8e8e8; display: flex; align-items: center; justify-content: center; }

.pages { height: 14px; flex: none; display: flex; align-items: center; padding-left: 2px; }
.pg1 { margin-left: 5px; border-left: 1px solid #bbb; padding-left: 1px; width: 75px; font-size: 9px; color: #555; }
.pg-d { margin-right: 5px; }
.vsep { width: 1px; height: 9px; background: #bbb; }
.plus { margin: 0 6px 0 5px; }
.s2 { margin-right: 9px; }
.pg2 { color: #3d5bd0; font-size: 9px; font-weight: 700; }
.colors { height: 11px; flex: none; display: flex; align-items: flex-start; }
.cl { width: 18px; font-size: 9px; line-height: 11px; color: #444; flex: none; }
.swatches { display: flex; margin-top: 1px; }
.swatches i { width: 4.6px; height: 9px; margin-right: .55px; display: block; flex: none; }

.status { height: 24px; flex: none; background: #2f5597; display: flex; align-items: center; color: #dfe7f5; padding-left: 10px; font-size: 9.5px; }
.link { text-decoration: underline; }
.pgn { margin-left: 6px; }
.st-right { margin-left: auto; display: flex; align-items: center; padding-right: 1px; }
.vb { width: 13px; height: 13px; display: flex; align-items: center; justify-content: center; box-sizing: border-box; }
.vb.on { background: #7f9ccb; }
.vb.dk { background: #4a6fab; }
.pm { font-size: 10px; }
.minus { margin: 0 5px 0 6px; }
.plusz { margin: 0 5px 0 4px; }
.slider { width: 60px; height: 1.5px; background: #cfd8ea; position: relative; }
.slider i { position: absolute; left: 9px; top: -4px; width: 3px; height: 9px; background: #fff; }
.pct { margin: 0 6px 0 5px; font-size: 9.5px; }
.st-d { border-top-color: #7f9ccb; margin-right: 6px; }
.grip { margin-left: 6px; align-self: flex-end; margin-bottom: -6px; }
</style>
